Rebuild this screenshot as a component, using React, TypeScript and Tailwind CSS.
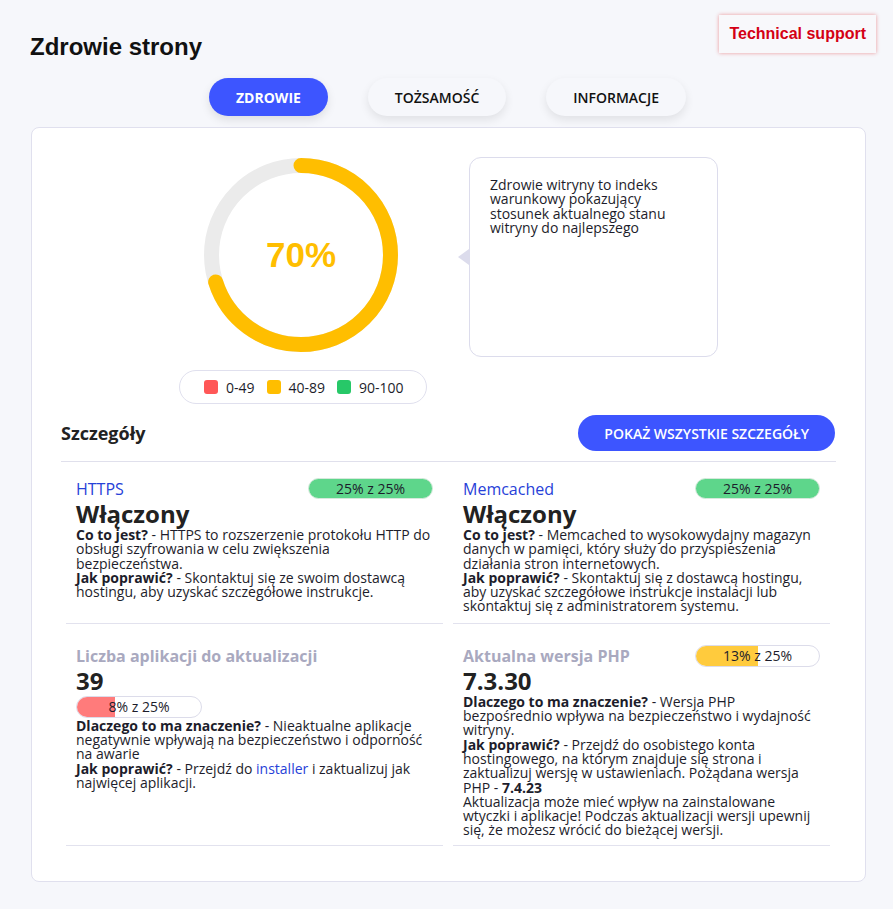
import React from "react";

const BODY = "text-[14px] leading-[14.3px] text-[#1d1d2b]";

function Donut() {
  const r = 89.5;
  const c = 2 * Math.PI * r;
  return (
    <div className="relative w-[194px] h-[194px]">
      <svg width="194" height="194" viewBox="0 0 194 194">
        <circle cx="97" cy="97" r={r} fill="none" stroke="#ebebeb" strokeWidth="15" />
        <circle
          cx="97"
          cy="97"
          r={r}
          fill="none"
          stroke="#ffbe00"
          strokeWidth="15"
          strokeLinecap="round"
          strokeDasharray={`${c * 0.7} ${c}`}
          transform="rotate(-90 97 97)"
        />
      </svg>
      <div className="absolute inset-0 flex items-center justify-center">
        <span className="font-['Liberation_Sans',Arial,sans-serif] font-bold text-[35px] text-[#ffbe00]">70%</span>
      </div>
    </div>
  );
}

function LegendItem({ color, label }: { color: string; label: string }) {
  return (
    <div className="flex items-center gap-[8px]">
      <span className={`w-[14px] h-[14px] rounded-[3px] ${color}`} />
      <span className="text-[14px] text-[#1d1d2b]">{label}</span>
    </div>
  );
}

function Pill({ fill, pct, label, w, h }: { fill: string; pct: number; label: string; w: string; h: string }) {
  return (
    <div className={`relative ${w} ${h} rounded-full border border-[#dcdcea] bg-white overflow-hidden`}>
      <div className={`absolute left-0 top-0 bottom-0 ${fill}`} style={{ width: `${pct}%` }} />
      <div className="absolute inset-0 flex items-center justify-center text-[14px] text-[#1d1d2b]">{label}</div>
    </div>
  );
}

export default function App() {
  return (
    <div className="min-h-[909px] bg-[#f6f7fb] font-['Open_Sans','Noto_Sans',sans-serif] text-[#1d1d2b]">
      <div className="flex justify-between items-start pt-[15px] pl-[30px] pr-[17px]">
        <h1 className="mt-[18px] font-['Liberation_Sans',Arial,sans-serif] font-bold text-[24px] leading-[28px] text-[#111]">
          Zdrowie strony
        </h1>
        <button className="h-[38px] px-[10px] bg-[#f8f8fb] shadow-[0_0_4px_rgba(220,0,0,0.4)] font-['Liberation_Sans',Arial,sans-serif] font-bold text-[16px] text-[#d40014]">
          Technical support
        </button>
      </div>

      <div className="flex justify-center gap-[40px] mt-[17px] ml-[2px]">
        <button className="h-[38px] px-[27px] rounded-full bg-[#3d55ff] text-white text-[14px] font-bold shadow-[0_4px_10px_rgba(0,0,0,0.1)]">
          ZDROWIE
        </button>
        <button className="h-[38px] px-[27px] rounded-full bg-[#f6f7fb] text-[#111] text-[14px] font-semibold shadow-[0_4px_10px_rgba(0,0,0,0.09)]">
          TOŻSAMOŚĆ
        </button>
        <button className="h-[38px] px-[27px] rounded-full bg-[#f6f7fb] text-[#111] text-[14px] font-semibold shadow-[0_4px_10px_rgba(0,0,0,0.09)]">
          INFORMACJE
        </button>
      </div>

      <div className="mt-[11px] ml-[31px] w-[835px] bg-white border border-[#e0e0ee] rounded-[8px] pb-[35px]">
        <div className="flex pt-[29px] pl-[147px]">
          <div className="w-[248px] flex flex-col">
            <div className="mt-[1px] ml-[25px]">
              <Donut />
            </div>
            <div className="mt-[18px] w-[248px] h-[34px] rounded-full border border-[#e0e0ee] flex items-center pl-[24px] gap-[12px]">
              <LegendItem color="bg-[#ff5757]" label="0-49" />
              <LegendItem color="bg-[#ffbe00]" label="40-89" />
              <LegendItem color="bg-[#27c868]" label="90-100" />
            </div>
          </div>
          <div className="relative ml-[42px] w-[249px] h-[200px] rounded-[12px] border border-[#dcdcec] pt-[20px] pl-[20px] pr-[42px]">
            <span className="absolute left-[-12px] top-[91px] w-0 h-0 border-y-[8px] border-y-transparent border-r-[11px] border-r-[#dcdcec]" />
            <p className={BODY}>Zdrowie witryny to indeks warunkowy pokazujący stosunek aktualnego stanu witryny do najlepszego</p>
          </div>
        </div>

        <div className="flex items-center justify-between mt-[11px] pl-[29px] pr-[30px]">
          <h2 className="text-[18px] font-bold text-[#222]">Szczegóły</h2>
          <button className="h-[36px] px-[26px] rounded-full bg-[#3d55ff] text-white text-[14px] font-semibold">
            POKAŻ WSZYSTKIE SZCZEGÓŁY
          </button>
        </div>
        <div className="mx-[29px] mt-[10px] h-px bg-[#e0e0ec]" />

        <div className="ml-[34px] w-[764px] grid grid-cols-2 gap-x-[10px] gap-y-[5px]">
          <div className="px-[10px] pt-[16px] pb-[9px] border-b border-[#e2e2ee]">
            <div className="flex items-center justify-between h-[21px]">
              <span className="text-[16px] leading-[22px] text-[#2741d8]">HTTPS</span>
              <div className="w-[125px] h-[21px] rounded-full bg-[#5ed68b] border border-[#d6e9dc] flex items-center justify-center text-[14px]">
                25% z 25%
              </div>
            </div>
            <div className="text-[24px] font-bold leading-[29px] text-[#222]">Włączony</div>
            <p className={BODY}>
              <b>Co to jest?</b> - HTTPS to rozszerzenie protokołu HTTP do obsługi szyfrowania w celu zwiększenia bezpieczeństwa.
              <br />
              <b>Jak poprawić?</b> - Skontaktuj się ze swoim dostawcą hostingu, aby uzyskać szczegółowe instrukcje.
            </p>
          </div>

          <div className="px-[10px] pt-[16px] pb-[9px] border-b border-[#e2e2ee]">
            <div className="flex items-center justify-between h-[21px]">
              <span className="text-[16px] leading-[22px] text-[#2741d8]">Memcached</span>
              <div className="w-[125px] h-[21px] rounded-full bg-[#5ed68b] border border-[#d6e9dc] flex items-center justify-center text-[14px]">
                25% z 25%
              </div>
            </div>
            <div className="text-[24px] font-bold leading-[29px] text-[#222]">Włączony</div>
            <p className={BODY}>
              <b>Co to jest?</b> - Memcached to wysokowydajny magazyn danych w pamięci, który służy do przyspieszenia działania stron internetowych.
              <br />
              <b>Jak poprawić?</b> - Skontaktuj się z dostawcą hostingu, aby uzyskać szczegółowe instrukcje instalacji lub skontaktuj się z administratorem systemu.
            </p>
          </div>

          <div className="px-[10px] pt-[16px] pb-[7px] border-b border-[#e2e2ee]">
            <div className="flex items-center h-[22px]">
              <span className="text-[16px] leading-[22px] font-bold text-[#a9a9bf]">Liczba aplikacji do aktualizacji</span>
            </div>
            <div className="text-[24px] font-bold leading-[28px] text-[#222]">39</div>
            <div className="mt-[1px] mb-[1px]">
              <Pill fill="bg-[#ff7b7b]" pct={31} label="8% z 25%" w="w-[126px]" h="h-[22px]" />
            </div>
            <p className={BODY}>
              <b>Dlaczego to ma znaczenie?</b> - Nieaktualne aplikacje negatywnie wpływają na bezpieczeństwo i odporność na awarie
              <br />
              <b>Jak poprawić?</b> - Przejdź do <span className="text-[#2741d8]">installer</span> i zaktualizuj jak najwięcej aplikacji.
            </p>
          </div>

          <div className="px-[10px] pt-[16px] pb-[7px] border-b border-[#e2e2ee]">
            <div className="flex items-center justify-between h-[22px]">
              <span className="text-[16px] leading-[22px] font-bold text-[#a9a9bf]">Aktualna wersja PHP</span>
              <Pill fill="bg-[#ffcb3d]" pct={50} label="13% z 25%" w="w-[125px]" h="h-[22px]" />
            </div>
            <div className="text-[24px] font-bold leading-[28px] text-[#222]">7.3.30</div>
            <p className={BODY}>
              <b>Dlaczego to ma znaczenie?</b> - Wersja PHP bezpośrednio wpływa na bezpieczeństwo i wydajność witryny.
              <br />
              <b>Jak poprawić?</b> - Przejdź do osobistego konta hostingowego, na którym znajduje się strona i zaktualizuj wersję w ustawieniach. Pożądana wersja PHP - <b>7.4.23</b>
              <br />
              Aktualizacja może mieć wpływ na zainstalowane wtyczki i aplikacje! Podczas aktualizacji wersji upewnij się, że możesz wrócić do bieżącej wersji.
            </p>
          </div>
        </div>
      </div>
    </div>
  );
}
